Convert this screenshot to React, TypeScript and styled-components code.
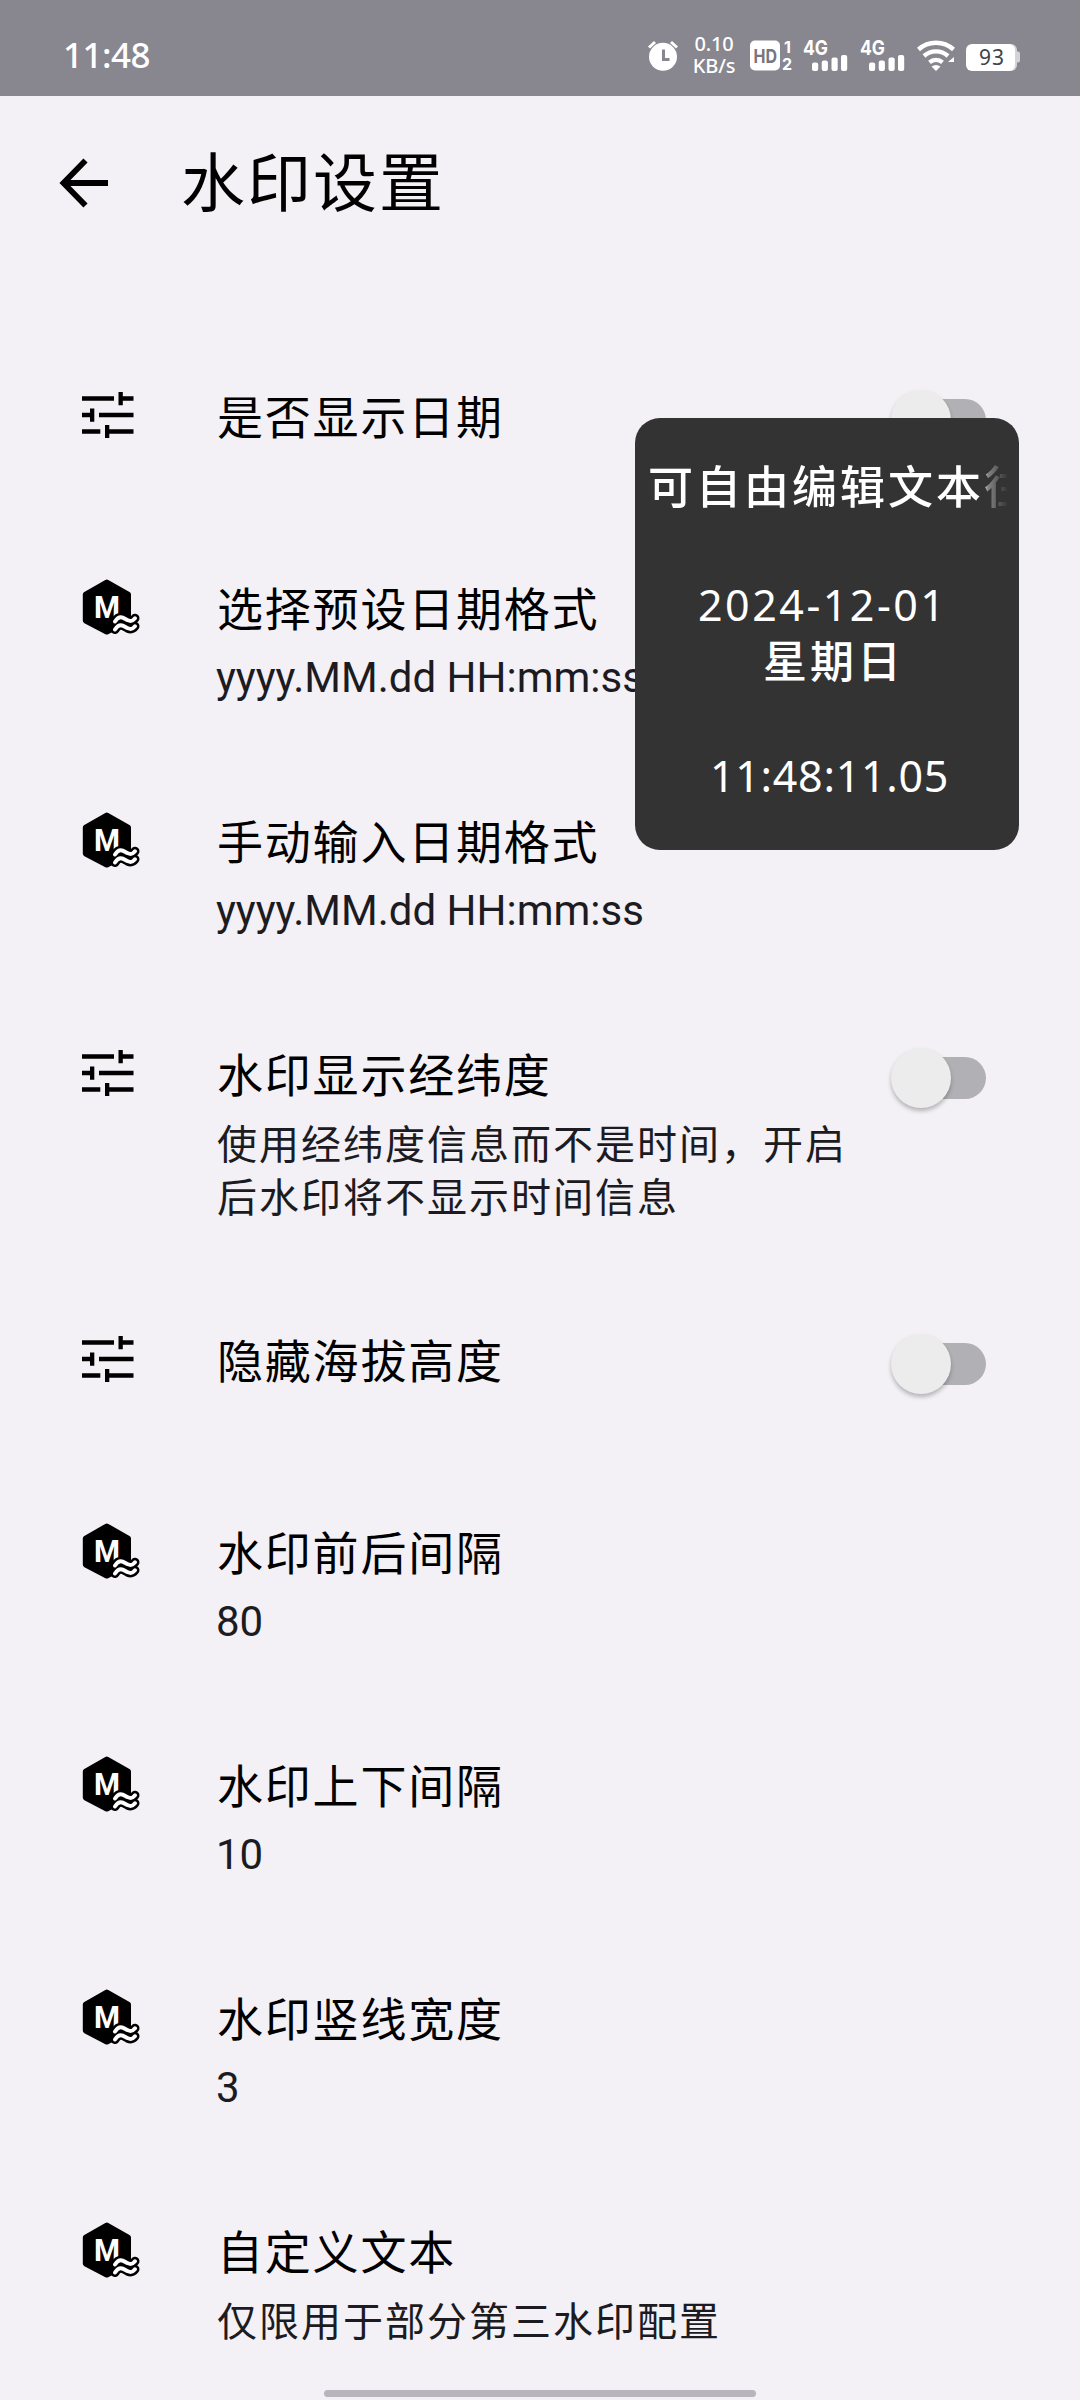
import React from "react";
import styled, { createGlobalStyle } from "styled-components";

const Global = createGlobalStyle`
  * { box-sizing: border-box; }
  body { margin: 0; background: #f3f0f6; }
`;

const Screen = styled.main`
  position: relative;
  display: flex;
  flex-direction: column;
  width: 1080px;
  height: 2400px;
  overflow: hidden;
  background: #f3f0f6;
  color: #000;
  font-family: "Noto Sans", "Noto Sans CJK SC", sans-serif;
`;

const StatusBar = styled.header`
  display: flex;
  flex: none;
  align-items: center;
  height: 96px;
  padding: 14px 60px 0 63px;
  background: #88868e;
  color: #fff;
`;

const Clock = styled.time`
  flex: 1;
  font-size: 35px;
  line-height: 40px;
  font-weight: 500;
  letter-spacing: -0.5px;
`;

const StatusIcons = styled.div`
  display: flex;
  align-items: center;
`;

const Speed = styled.div`
  display: flex;
  flex-direction: column;
  width: 44px;
  font-size: 20px;
  line-height: 22px;
  font-weight: 500;
  text-align: center;
  letter-spacing: -0.2px;
  margin: 0 14px 0 12px;
`;

const Glyph = styled.svg<{ $w: number; $h: number; $gap?: number }>`
  display: block;
  flex: none;
  width: ${(p) => p.$w}px;
  height: ${(p) => p.$h}px;
  margin-right: ${(p) => p.$gap ?? 0}px;
  overflow: visible;
`;

const TitleBar = styled.div`
  display: flex;
  flex: none;
  align-items: center;
  height: 247px;
  padding: 0 60px 75px;
`;

const PageTitle = styled.h1`
  margin: 0 0 0 73px;
  font-size: 64px;
  line-height: 80px;
  font-weight: 400;
  letter-spacing: 2px;
`;

const List = styled.section`
  display: flex;
  flex: none;
  flex-direction: column;
`;

const Row = styled.div<{ $h: number }>`
  display: flex;
  flex: none;
  align-items: flex-start;
  height: ${(p) => p.$h}px;
  padding: 42px 92px 0 82px;
`;

const IconSlot = styled.div`
  flex: none;
  width: 135px;
  padding-top: 2px;
`;

const Texts = styled.div`
  display: flex;
  flex: 1;
  flex-direction: column;
  gap: 12px;
`;

const RowTitle = styled.div`
  font-size: 46px;
  line-height: 62px;
  letter-spacing: 1.8px;
  white-space: nowrap;
`;

const RowSub = styled.div<{ $latin?: boolean }>`
  margin-left: ${(p) => (p.$latin ? -1 : 0)}px;
  font-family: ${(p) => (p.$latin ? "Roboto, sans-serif" : "inherit")};
  font-size: ${(p) => (p.$latin ? 42 : 40)}px;
  line-height: 53px;
  letter-spacing: ${(p) => (p.$latin ? 0 : 2)}px;
  color: #1c1b21;
  white-space: pre-line;
`;

const Track = styled.div`
  display: flex;
  flex: none;
  align-items: center;
  width: 96px;
  height: 62px;
  padding-left: 24px;
  margin-top: 4px;
  margin-right: 2px;
`;

const Rail = styled.div`
  display: flex;
  align-items: center;
  width: 72px;
  height: 42px;
  border-radius: 21px;
  background: #b1b0b4;
`;

const Knob = styled.div`
  flex: none;
  width: 60px;
  height: 60px;
  margin-left: -23px;
  border-radius: 50%;
  background: #ececec;
  box-shadow: 0 3px 4px rgba(0, 0, 0, 0.25);
`;

const Card = styled.aside`
  position: absolute;
  left: 635px;
  top: 418px;
  display: flex;
  flex-direction: column;
  width: 384px;
  height: 432px;
  padding: 38px 12px 0 13px;
  border-radius: 25px;
  background: #333;
  color: #fff;
`;

const CardText = styled.div`
  overflow: hidden;
  font-size: 45px;
  font-weight: 500;
  line-height: 62px;
  letter-spacing: 3px;
  white-space: nowrap;
  mask-image: linear-gradient(to right, #000 334px, rgba(0, 0, 0, 0.4) 340px, transparent 360px);
`;

const CardLine = styled.div<{ $top: number; $shift?: number; $latin?: boolean; $tracking?: number }>`
  margin-top: ${(p) => p.$top}px;
  padding-left: ${(p) => p.$shift ?? 0}px;
  font-size: ${(p) => (p.$latin ? 43 : 44)}px;
  font-weight: ${(p) => (p.$latin ? 400 : 500)};
  line-height: 56px;
  letter-spacing: ${(p) => p.$tracking ?? 3}px;
`;

const HomeBar = styled.div`
  position: absolute;
  left: 324px;
  bottom: 3px;
  width: 432px;
  height: 7px;
  border-radius: 4px;
  background: #b9b5bc;
`;

const TuneIcon = () => (
  <Glyph $w={52} $h={58} viewBox="0 0 52 58">
    <path d="M0 9.3h32v4.5H0zM36.5 5h4.3v4.3H51.500v4.5H40.800v4.500h-4.300zM0 25.800h8V21.500h4.300v13.300H8v-4.500H0zM17 25.800h34.500v4.500H17zM0 42.300h18.300v4.500H0zM23 38h4.300v4.300h24.200v4.500H27.300V51H23z" />
  </Glyph>
);

const waves = [
  "M33 42.500c5-7.500 9-3 13-1.200 3.500 1.500 5 .5 7-2",
  "M33 50.500c5-7.500 9-3 13-1.200 3.500 1.500 5 .5 7-2",
];

const MarkIcon = () => (
  <Glyph $w={58} $h={58} viewBox="0 0 58 58">
    <path
      d="M24.800 3.500 46 15.500V41.500L24.800 52.500 3.800 41.500V15.500z"
      fill="#000"
      stroke="#000"
      strokeWidth="6"
      strokeLinejoin="round"
    />
    <text
      x="12"
      y="39"
      fontSize="32"
      fontWeight="700"
      textLength="26"
      lengthAdjust="spacingAndGlyphs"
      fontFamily="Roboto, sans-serif"
      fill="#fff"
    >
      M
    </text>
    <g fill="none" strokeLinecap="round">
      {waves.map((d) => (
        <path key={d} d={d} stroke="#000" strokeWidth="9" />
      ))}
      {waves.map((d) => (
        <path key={d} d={d} stroke="#fff" strokeWidth="4" />
      ))}
    </g>
  </Glyph>
);

const Signal = ({ gap }: { gap: number }) => (
  <Glyph $w={45} $h={32} $gap={gap} viewBox="0 0 45 32" fill="#fff">
    <text x="0" y="15.500" fontSize="20" fontWeight="700" fontFamily="Inter, sans-serif" textLength="25" lengthAdjust="spacingAndGlyphs">
      4G
    </text>
    <rect x="9" y="23.500" width="6.200" height="8.500" rx="2" />
    <rect x="18.700" y="21.500" width="6.200" height="10.500" rx="2" />
    <rect x="28.500" y="18.500" width="6.200" height="13.500" rx="2" />
    <rect x="38" y="16" width="6.200" height="16" rx="2" />
  </Glyph>
);

const Switch = () => (
  <Track>
    <Rail>
      <Knob />
    </Rail>
  </Track>
);

type Item = {
  title: string;
  sub?: string;
  latin?: boolean;
  toggle?: boolean;
  height: number;
};

const items: Item[] = [
  { title: "是否显示日期", toggle: true, height: 192 },
  { title: "选择预设日期格式", sub: "yyyy.MM.dd HH:mm:ss", latin: true, height: 233 },
  { title: "手动输入日期格式", sub: "yyyy.MM.dd HH:mm:ss", latin: true, height: 233 },
  { title: "水印显示经纬度", sub: "使用经纬度信息而不是时间，开启\n后水印将不显示时间信息", toggle: true, height: 286 },
  { title: "隐藏海拔高度", toggle: true, height: 192 },
  { title: "水印前后间隔", sub: "80", latin: true, height: 233 },
  { title: "水印上下间隔", sub: "10", latin: true, height: 233 },
  { title: "水印竖线宽度", sub: "3", latin: true, height: 233 },
  { title: "自定义文本", sub: "仅限用于部分第三水印配置", height: 191 },
];

export default function App() {
  return (
    <Screen lang="zh-CN">
      <Global />
      <StatusBar>
        <Clock>11:48</Clock>
        <StatusIcons>
          <Glyph $w={32} $h={32} viewBox="0 0 32 32">
            <circle cx="15" cy="17.800" r="14" fill="#fff" />
            <path d="M1 8.500 7 3M23 3l6 5.500" stroke="#fff" strokeWidth="3" />
            <path d="M15.500 10.500v10h6" fill="none" stroke="#88868e" strokeWidth="3" />
          </Glyph>
          <Speed>
            <span>0.10</span>
            <span>KB/s</span>
          </Speed>
          <Glyph $w={42} $h={32} $gap={11} viewBox="0 0 42 32" fontFamily="Inter, sans-serif" fontWeight="700">
            <rect x="0" y="1.500" width="30" height="30" rx="5" fill="#fff" />
            <text x="3.500" y="23.500" fontSize="19" textLength="23.500" lengthAdjust="spacingAndGlyphs" fill="#77757d">
              HD
            </text>
            <text x="34" y="13.500" fontSize="16" fill="#fff">1</text>
            <text x="32" y="31" fontSize="16" fill="#fff">2</text>
          </Glyph>
          <Signal gap={12} />
          <Signal gap={12} />
          <Glyph $w={38} $h={32} $gap={11} viewBox="0 0 38 32">
            <g fill="none" stroke="#fff" strokeWidth="4.400">
              <path d="M1.500 10.500a26 26 0 0 1 35 0" />
              <path d="M7 17a18 18 0 0 1 24 0" />
              <path d="M12.500 23.300a10 10 0 0 1 13 0" />
            </g>
            <path d="M14.500 27.500q4.500-3 9 0L19 32z" fill="#fff" />
            <path d="m31 23 6-5v5z" fill="#fff" />
          </Glyph>
          <Glyph $w={54} $h={32} viewBox="0 0 54 32">
            <rect x="46" y="12.500" width="8" height="11" rx="2" fill="#d5d3d9" />
            <rect x="4" y="5" width="47" height="27" rx="6" fill="#d5d3d9" />
            <rect x="0" y="5" width="49" height="27" rx="6" fill="#fff" />
            <text x="26" y="25.500" fontSize="21" textAnchor="middle" fill="#44434a" letterSpacing="1">
              93
            </text>
          </Glyph>
        </StatusIcons>
      </StatusBar>
      <TitleBar>
        <Glyph $w={48} $h={50} viewBox="0 0 48 50">
          <path d="M48 26H4M25.500 3.500 3.500 26l22 22.500" fill="none" stroke="#000" strokeWidth="5.800" />
        </Glyph>
        <PageTitle>水印设置</PageTitle>
      </TitleBar>
      <List>
        {items.map((item) => (
          <Row key={item.title} $h={item.height}>
            <IconSlot>{item.toggle ? <TuneIcon /> : <MarkIcon />}</IconSlot>
            <Texts>
              <RowTitle>{item.title}</RowTitle>
              {item.sub && <RowSub $latin={item.latin}>{item.sub}</RowSub>}
            </Texts>
            {item.toggle && <Switch />}
          </Row>
        ))}
      </List>
      <Card>
        <CardText>可自由编辑文本往</CardText>
        <CardLine $top={59} $shift={50} $latin $tracking={2.5}>
          2024-12-01
        </CardLine>
        <CardLine $top={0} $shift={115}>
          星期日
        </CardLine>
        <CardLine $top={59} $shift={62} $latin $tracking={0.7}>
          11:48:11.05
        </CardLine>
      </Card>
      <HomeBar />
    </Screen>
  );
}
